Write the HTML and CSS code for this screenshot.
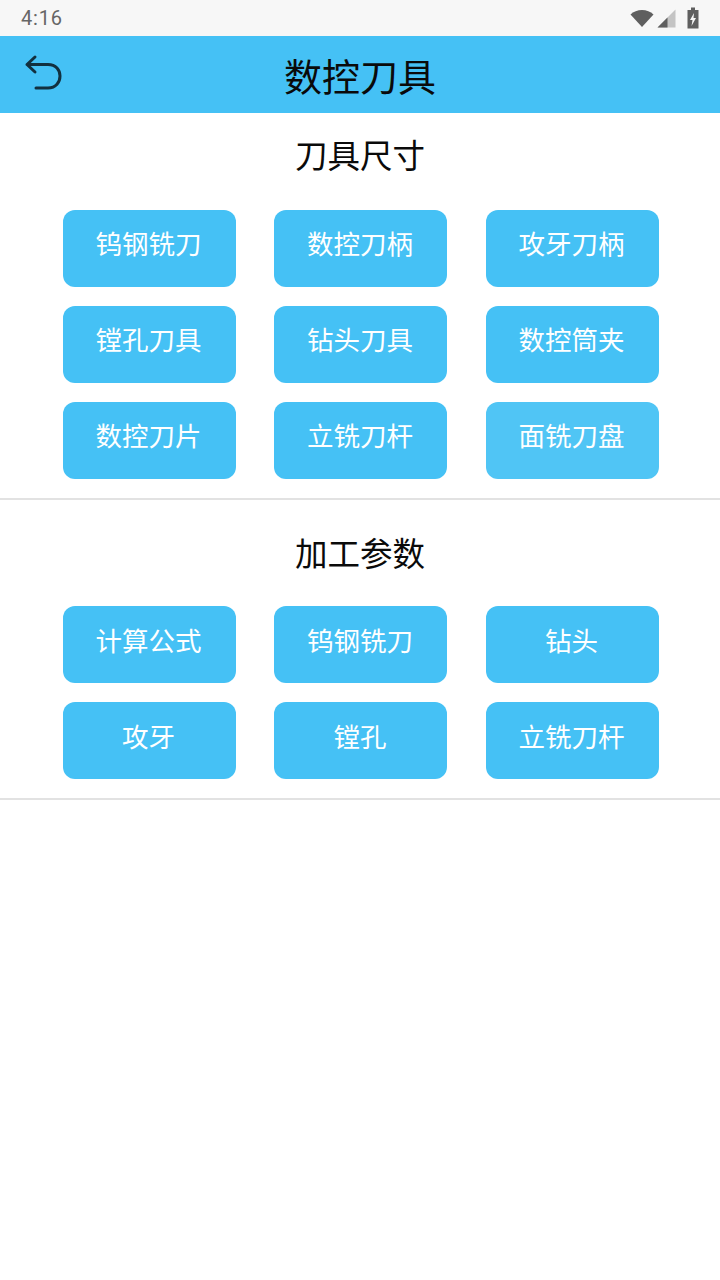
FILE: index.html
```html
<!DOCTYPE html>
<html lang="zh">
<head>
<meta charset="utf-8">
<title>数控刀具</title>
<link rel="stylesheet" href="styles.css">
</head>
<body>
<div class="status">
  <span class="time">4:16</span>
  <div class="status-icons">
    <svg class="ic-wifi" width="24" height="18" viewBox="0 0 24 18"><path d="M0.500 5.500C3.500 2.500 7.500 1 12 1s8.500 1.500 11.500 4.500L12 18z" fill="#5f5f5f"/></svg>
    <svg class="ic-signal" width="19" height="19" viewBox="0 0 19 19"><path d="M18.500 0.500V18.500H0.500z" fill="#c4c4c4"/><path d="M10.500 8.500V18.500H0.500z" fill="#5f5f5f"/></svg>
    <svg class="ic-batt" width="12" height="22" viewBox="0 0 12 22"><path d="M4 0.500h4v2.500h3.500v18.500H0.500V3H4z" fill="#5f5f5f"/><path d="M7 6L3 13H5.500L4.500 19L9 11H6.500z" fill="#f7f7f7"/></svg>
  </div>
</div>
<header class="bar">
  <svg class="back" width="40" height="40" viewBox="0 0 40 40"><path d="M11 5L3 12.500L11 20M3 12.500H24C32 12.500 36 18 36 24S32 36 24 36H12" fill="none" stroke="#12303f" stroke-width="3" stroke-linecap="round" stroke-linejoin="round"/></svg>
  <h1 class="title">数控刀具</h1>
</header>
<section class="sec">
  <h2 class="sec-title">刀具尺寸</h2>
  <div class="grid">
    <a class="btn">钨钢铣刀</a><a class="btn">数控刀柄</a><a class="btn">攻牙刀柄</a>
    <a class="btn">镗孔刀具</a><a class="btn">钻头刀具</a><a class="btn">数控筒夹</a>
    <a class="btn">数控刀片</a><a class="btn">立铣刀杆</a><a class="btn btn-light">面铣刀盘</a>
  </div>
</section>
<section class="sec sec-next">
  <h2 class="sec-title">加工参数</h2>
  <div class="grid">
    <a class="btn">计算公式</a><a class="btn">钨钢铣刀</a><a class="btn">钻头</a>
    <a class="btn">攻牙</a><a class="btn">镗孔</a><a class="btn">立铣刀杆</a>
  </div>
</section>
</body>
</html>
```
FILE: styles.css
```css
* { box-sizing: border-box; }
html, body { margin: 0; padding: 0; background: #fff; }
body { width: 720px; height: 1280px; overflow: hidden; font-family: "Noto Sans CJK SC", "Noto Sans", sans-serif; }
.status { height: 36px; background: #f7f7f7; display: flex; align-items: center; justify-content: space-between; padding: 0 21px 0 21px; }
.time { font-family: Roboto, sans-serif; font-size: 20px; color: #666; letter-spacing: .8px; }
.status-icons { display: flex; align-items: center; }
.ic-wifi { margin-right: 3px; }
.ic-signal { margin-right: 11px; }
.bar { height: 77px; background: #45c1f5; display: flex; align-items: center; justify-content: center; position: relative; }
.back { position: absolute; left: 24px; top: 16px; }
.title { margin: 0; font-size: 38px; line-height: 1; font-weight: 400; color: #0a0a0a; }
.sec { border-bottom: 2px solid #e2e2e2; padding-bottom: 19px; }
.sec-next { padding-top: 9px; }
.sec-title { margin: 0; height: 97px; padding-top: 19px; text-align: center; font-size: 32.500px; line-height: 44px; font-weight: 400; color: #0a0a0a; }
.sec-next .sec-title { padding-top: 21px; }
.grid { display: grid; grid-template-columns: repeat(3, 173px); justify-content: center; column-gap: 38.500px; row-gap: 19px; padding-left: 1px; }
.btn { height: 77px; border-radius: 12px; background: #45c1f5; color: #fff; display: flex; align-items: center; justify-content: center; font-size: 26.500px; padding: 0 1px 13px 0; }
.sec-next .btn { padding-bottom: 11px; }
.btn-light { background: #50c5f5; }
```
